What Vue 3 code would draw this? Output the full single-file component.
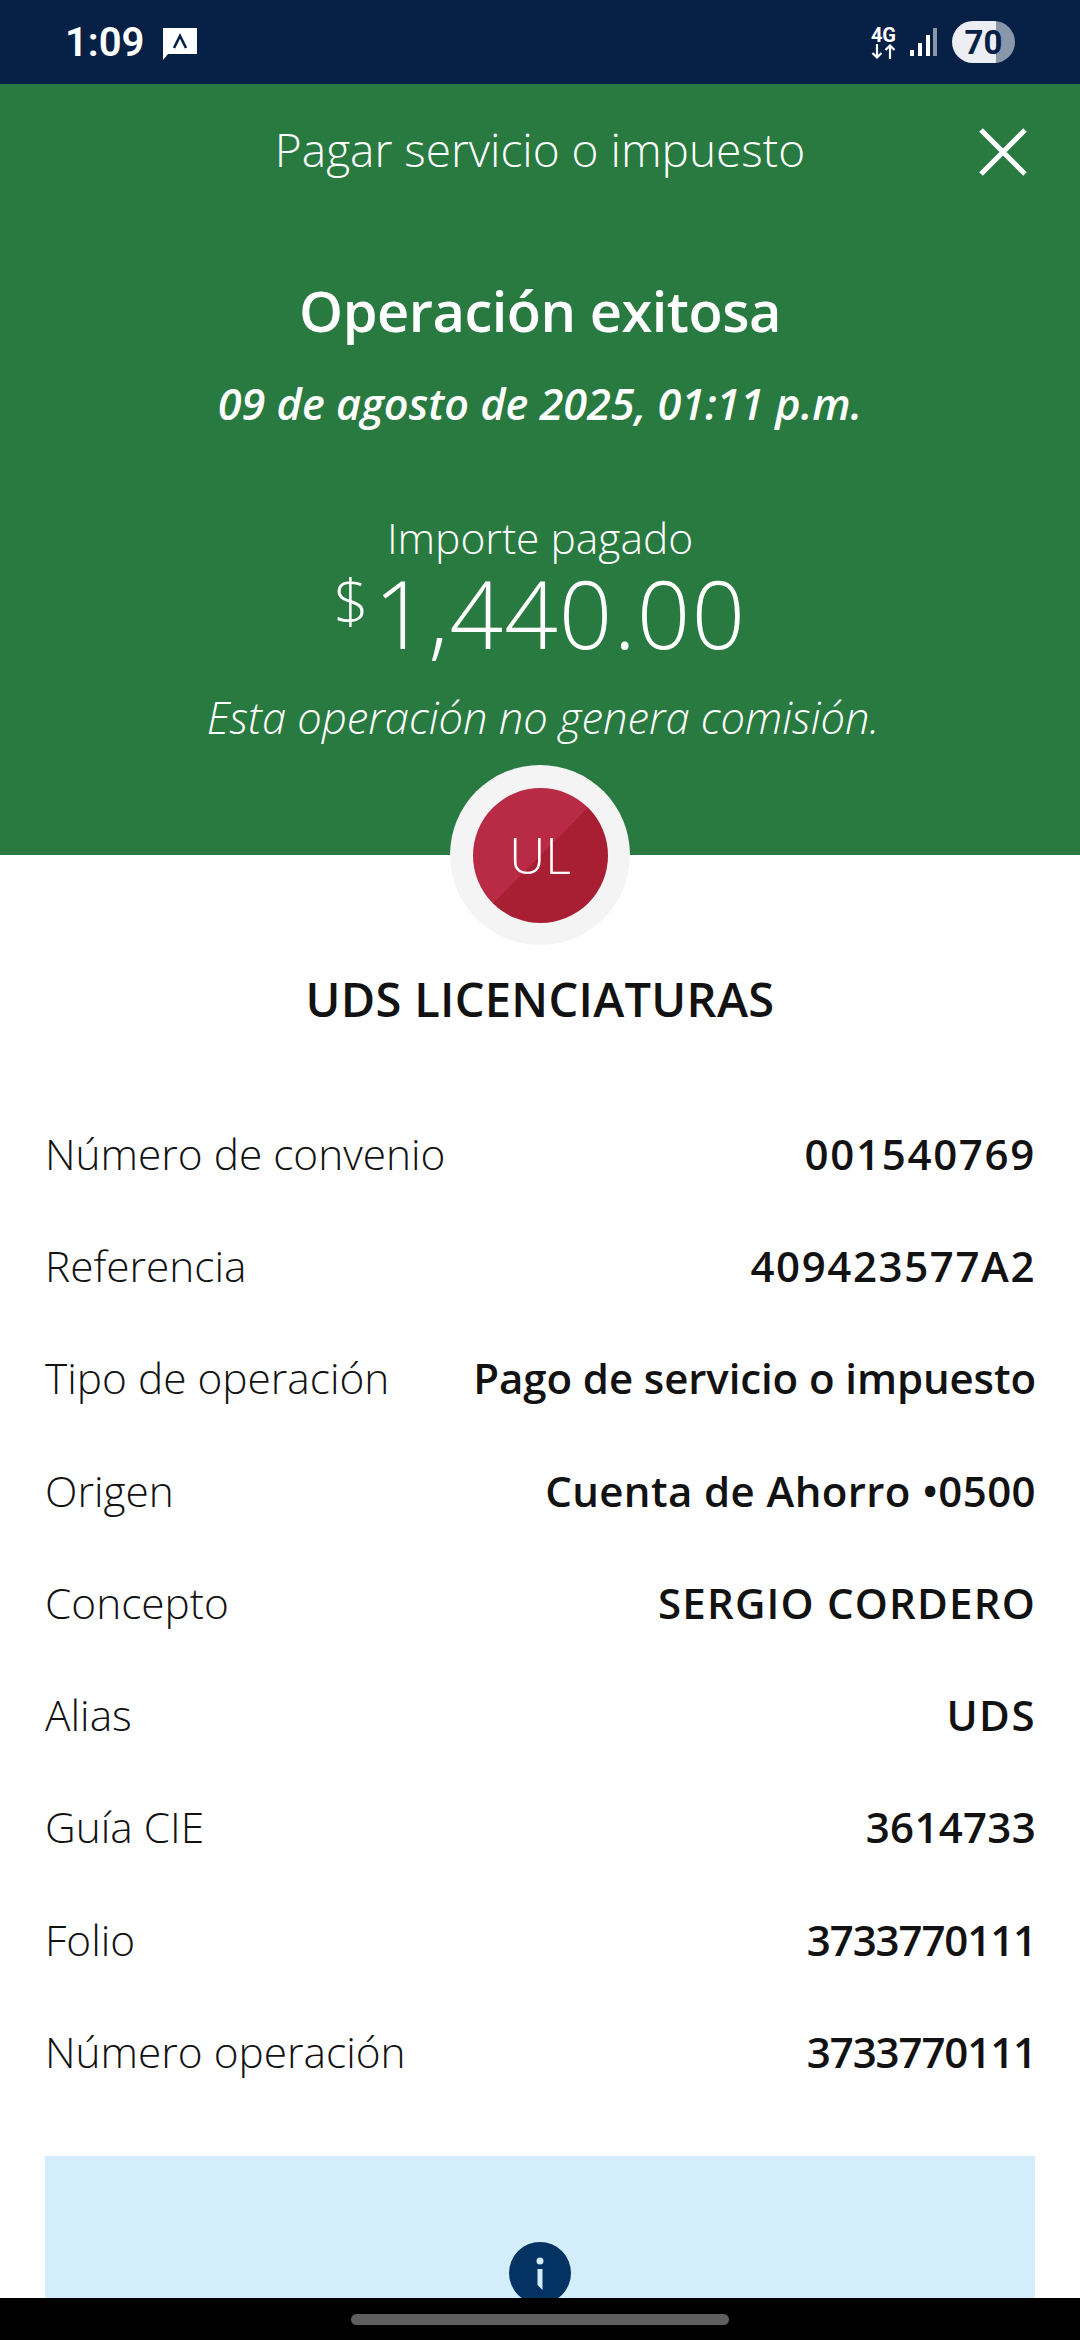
<template>
  <div class="screen">
    <div class="status-bar">
      <div class="status-bar__left">
        <span class="status-bar__time">1:09</span>
        <svg class="status-bar__notif" width="36" height="33" viewBox="0 0 36 33">
          <path fill="#fff" d="M1 1h34v26H6l-5 6z" />
          <path fill="none" stroke="#072146" stroke-width="2.6" d="M12 21l6-12 6 12" />
        </svg>
      </div>
      <div class="status-bar__right">
        <div class="net">
          <span class="net__label">4G</span>
          <svg width="25" height="15" viewBox="0 0 25 15">
            <path fill="none" stroke="#fff" stroke-width="2.200" d="M6 0v13M1.500 9L6 13.500 10.500 9M19 15V2M14.500 6L19 1.500 23.500 6" />
          </svg>
        </div>
        <svg class="signal" width="27" height="29" viewBox="0 0 27 29">
          <rect x="0" y="22" width="4" height="6" fill="#fff" />
          <rect x="8" y="15" width="4" height="13" fill="#fff" />
          <rect x="16" y="7" width="4" height="21" fill="#fff" />
          <rect x="23" y="0" width="4" height="28" fill="#8a97ab" />
        </svg>
        <div class="battery"><span>70</span></div>
      </div>
    </div>

    <header class="hero">
      <div class="hero__bar">
        <span class="hero__title">Pagar servicio o impuesto</span>
        <svg class="hero__close" width="48" height="48" viewBox="0 0 48 48">
          <path fill="none" stroke="#fff" stroke-width="5" d="M2 2l44 44M46 2L2 46" />
        </svg>
      </div>
      <h1 class="hero__heading">Operación exitosa</h1>
      <p class="hero__date">09 de agosto de 2025, 01:11 p.m.</p>
      <p class="hero__label">Importe pagado</p>
      <p class="hero__amount"><span class="hero__currency">$</span>1,440.00</p>
      <p class="hero__note">Esta operación no genera comisión.</p>
    </header>

    <div class="avatar">
      <div class="avatar__disc">UL</div>
    </div>
    <h2 class="payee">UDS LICENCIATURAS</h2>

    <dl class="details">
      <div v-for="row in rows" :key="row.label" class="details__row">
        <dt>{{ row.label }}</dt>
        <dd :style="{ letterSpacing: row.tracking }">{{ row.value }}</dd>
      </div>
    </dl>

    <div class="notice">
      <svg class="notice__icon" width="62" height="62" viewBox="0 0 62 62">
        <circle cx="31" cy="31" r="31" fill="#043263" />
        <circle cx="31" cy="19" r="3.500" fill="#d4edfc" />
        <path fill="#d4edfc" d="M28.500 27h5v21l-5-5z" />
      </svg>
    </div>

    <div class="nav-bar"><span class="nav-bar__pill"></span></div>
  </div>
</template>

<script setup>
const rows = [
  { label: 'Número de convenio', value: '001540769', tracking: '1.7px' },
  { label: 'Referencia', value: '409423577A2', tracking: '1.6px' },
  { label: 'Tipo de operación', value: 'Pago de servicio o impuesto', tracking: '-0.1px' },
  { label: 'Origen', value: 'Cuenta de Ahorro •0500', tracking: '0.4px' },
  { label: 'Concepto', value: 'SERGIO CORDERO', tracking: '1.2px' },
  { label: 'Alias', value: 'UDS', tracking: '1.5px' },
  { label: 'Guía CIE', value: '3614733', tracking: '0.3px' },
  { label: 'Folio', value: '3733770111', tracking: '-1.1px' },
  { label: 'Número operación', value: '3733770111', tracking: '-1.1px' },
]
</script>

<style>
body {
  background: #fff;
}
</style>

<style scoped>
.screen {
  display: flex;
  flex-direction: column;
  width: 1080px;
  height: 2340px;
  overflow: hidden;
  background: #fff;
  font-family: "Open Sans", "Noto Sans", sans-serif;
  color: #121212;
}

.status-bar {
  flex: none;
  display: flex;
  align-items: center;
  justify-content: space-between;
  height: 84px;
  padding: 0 65px;
  background: #072146;
  color: #fff;
  font-family: "Roboto", sans-serif;
}

.status-bar__left,
.status-bar__right {
  display: flex;
  align-items: center;
}

.status-bar__time {
  font-size: 40px;
  font-weight: 600;
}

.status-bar__notif {
  margin-left: 18px;
  margin-top: 2px;
}

.net {
  display: flex;
  flex-direction: column;
  align-items: center;
  margin-right: 14px;
}

.net__label {
  font-size: 20px;
  font-weight: 700;
  line-height: 18px;
}

.signal {
  margin-right: 15px;
}

.battery {
  display: flex;
  align-items: center;
  justify-content: center;
  width: 63px;
  height: 42px;
  border-radius: 21px;
  background: linear-gradient(90deg, #eceef3 70%, #8a97ab 70%);
  color: #072146;
  font-size: 33px;
  font-weight: 700;
}

.hero {
  flex: none;
  display: flex;
  flex-direction: column;
  align-items: center;
  height: 771px;
  background: #287a40;
  color: #fff;
}

.hero__bar {
  position: relative;
  display: flex;
  justify-content: center;
  align-items: center;
  width: 100%;
  height: 130px;
}

.hero__title {
  font-size: 46px;
  font-weight: 300;
}

.hero__close {
  position: absolute;
  right: 53px;
  top: 44px;
}

.hero__heading {
  margin: 61px 0 0;
  font-size: 56px;
  font-weight: 600;
  line-height: 70px;
  letter-spacing: -0.5px;
}

.hero__date {
  margin: 34px 0 0;
  font-size: 43.200px;
  font-style: italic;
  font-weight: 600;
  line-height: 50px;
}

.hero__label {
  margin: 84px 0 0;
  font-size: 42.500px;
  font-weight: 300;
  line-height: 50px;
}

.hero__amount {
  display: flex;
  margin: 0;
  font-size: 94px;
  font-weight: 300;
  line-height: 100px;
  letter-spacing: 1px;
}

.hero__currency {
  flex: none;
  height: 60px;
  margin-top: 8px;
  margin-right: 4px;
  font-size: 61px;
  line-height: 60px;
}

.hero__note {
  margin: 30px 0 0;
  padding-left: 6px;
  font-size: 43.500px;
  font-style: italic;
  font-weight: 300;
  line-height: 50px;
}

.avatar {
  flex: none;
  display: flex;
  align-items: center;
  justify-content: center;
  width: 180px;
  height: 180px;
  margin: -90px auto 0;
  border-radius: 50%;
  background: #f4f4f4;
}

.avatar__disc {
  display: flex;
  align-items: center;
  justify-content: center;
  width: 135px;
  height: 135px;
  border-radius: 50%;
  background: linear-gradient(135deg, #b92a45 50%, #a81e33 50%);
  color: #fff;
  font-size: 50px;
  font-weight: 300;
}

.payee {
  flex: none;
  margin: 26px 0 0;
  text-align: center;
  font-size: 47px;
  font-weight: 600;
  line-height: 56px;
  letter-spacing: 0.3px;
}

.details {
  flex: none;
  margin: 70px 0 0;
  padding: 0 44px 0 45px;
}

.details__row {
  display: flex;
  align-items: center;
  justify-content: space-between;
  height: 112.300px;
}

.details dt {
  font-size: 42.400px;
  font-weight: 300;
}

.details dd {
  margin: 0;
  font-size: 42px;
  font-weight: 600;
}

.notice {
  flex: 1;
  min-height: 0;
  display: flex;
  justify-content: center;
  overflow: hidden;
  margin: 48px 45px 0;
  padding-top: 86px;
  background: #d4edfc;
}

.notice__icon {
  flex: none;
}

.nav-bar {
  flex: none;
  display: flex;
  justify-content: center;
  box-sizing: border-box;
  height: 42px;
  padding-top: 16px;
  background: #000;
}

.nav-bar__pill {
  width: 378px;
  height: 11px;
  border-radius: 6px;
  background: #5f5f5f;
}
</style>
